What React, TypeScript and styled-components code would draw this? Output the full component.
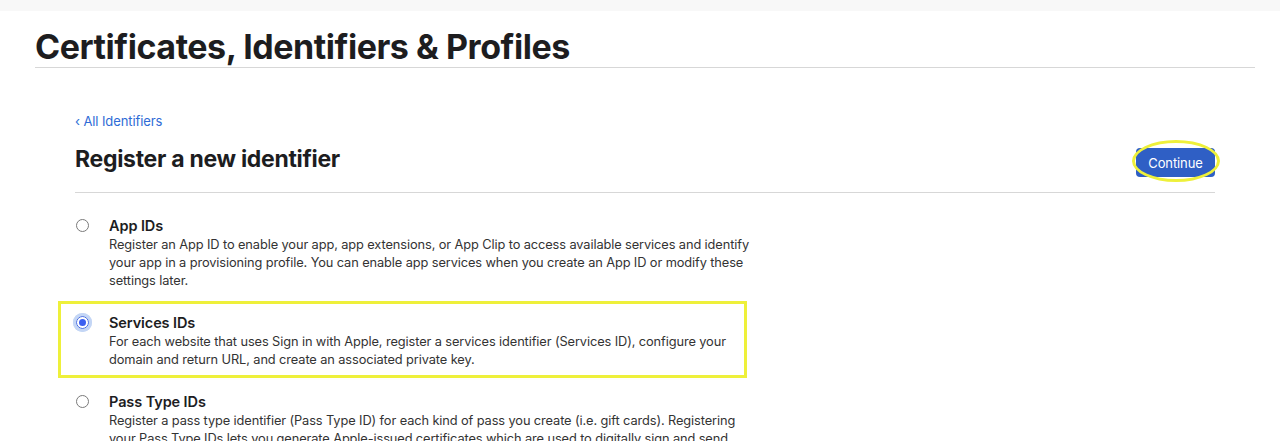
import React from "react";
import styled, { createGlobalStyle } from "styled-components";

const Global = createGlobalStyle`
  html, body { margin: 0; padding: 0; background: #ffffff; }
  body {
    font-family: Inter, "Noto Sans", "Liberation Sans", sans-serif;
    color: #1d1d1f;
    -webkit-font-smoothing: antialiased;
  }
  * { box-sizing: border-box; }
`;

const TopBar = styled.div`
  height: 11px;
  background: #f8f8f8;
`;

const Page = styled.div`
  padding: 0 25px 0 35px;
`;

const PageTitle = styled.h1`
  margin: 0;
  padding-top: 16px;
  font-size: 34px;
  line-height: 40px;
  font-weight: 700;
  letter-spacing: -0.45px;
  color: #1d1d1f;
  border-bottom: 1px solid #d7d7d7;
`;

const Content = styled.div`
  padding: 42px 40px 0 40px;
`;

const BackLink = styled.a`
  display: inline-block;
  font-size: 13px;
  line-height: 18px;
  color: #2e6bd6;
  text-decoration: none;
  letter-spacing: -0.1px;
`;

const HeaderRow = styled.div`
  display: flex;
  align-items: center;
  justify-content: space-between;
  height: 63px;
  padding-bottom: 5px;
  border-bottom: 1px solid #d7d7d7;
`;

const SubTitle = styled.h2`
  margin: 0;
  font-size: 23px;
  line-height: 28px;
  font-weight: 700;
  letter-spacing: -0.3px;
  color: #1d1d1f;
`;

const ButtonWrap = styled.div`
  position: relative;
  margin-top: 8px;
`;

const PrimaryButton = styled.button`
  display: block;
  width: 79px;
  height: 29px;
  border: none;
  border-radius: 4px;
  background: #2f5fc5;
  color: #ffffff;
  font-family: inherit;
  font-size: 13px;
  letter-spacing: -0.1px;
  padding: 0;
`;

const EllipseMark = styled.span`
  position: absolute;
  left: -4px;
  top: -8px;
  width: 88px;
  height: 42px;
  border: 3px solid #eef03a;
  border-radius: 50%;
  pointer-events: none;
`;

const List = styled.div`
  padding-top: 23px;
`;

const Item = styled.label`
  position: relative;
  display: grid;
  grid-template-columns: 34px 1fr;
  padding-bottom: 23px;
`;

const RadioCell = styled.span`
  display: flex;
  justify-content: flex-start;
  padding-top: 3px;
  padding-left: 1px;
`;

const Radio = styled.span<{ $checked?: boolean }>`
  position: relative;
  width: 13px;
  height: 13px;
  border-radius: 50%;
  border: 1px solid ${(p) => (p.$checked ? "#3e63e0" : "#7a7a7a")};
  background: #fff;
  ${(p) =>
    p.$checked &&
    `
    outline: 3px solid #c4d6f5;
    outline-offset: 0;
    box-shadow: 0 0 0 3px #c4d6f5;
    &::before {
      content: "";
      position: absolute;
      left: -4px; top: -4px;
      width: 19px; height: 19px;
      background: #c4d6f5;
      z-index: -1;
    }
    &::after {
      content: "";
      position: absolute;
      left: 2px; top: 2px;
      width: 7px; height: 7px;
      border-radius: 50%;
      background: #3b5ff0;
    }
  `}
`;

const Texts = styled.div`
  display: flex;
  flex-direction: column;
`;

const ItemTitle = styled.div`
  font-size: 14.5px;
  line-height: 20px;
  font-weight: 600;
  color: #1d1d1f;
  letter-spacing: -0.1px;
`;

const ItemDesc = styled.div`
  font-size: 12.8px;
  line-height: 18px;
  color: #333333;
  letter-spacing: -0.1px;
  white-space: nowrap;
`;

const BoxMark = styled.span`
  position: absolute;
  left: -17px;
  top: -12px;
  width: 689px;
  height: 77px;
  border: 3px solid #eef03a;
  pointer-events: none;
`;

type Entry = { title: string; lines: string[]; checked?: boolean; marked?: boolean };

const entries: Entry[] = [
  {
    title: "App IDs",
    lines: [
      "Register an App ID to enable your app, app extensions, or App Clip to access available services and identify",
      "your app in a provisioning profile. You can enable app services when you create an App ID or modify these",
      "settings later.",
    ],
  },
  {
    title: "Services IDs",
    checked: true,
    marked: true,
    lines: [
      "For each website that uses Sign in with Apple, register a services identifier (Services ID), configure your",
      "domain and return URL, and create an associated private key.",
    ],
  },
  {
    title: "Pass Type IDs",
    lines: [
      "Register a pass type identifier (Pass Type ID) for each kind of pass you create (i.e. gift cards). Registering",
      "your Pass Type IDs lets you generate Apple-issued certificates which are used to digitally sign and send",
      "updates to your passes, and allow your passes to be recognized by Wallet.",
    ],
  },
];

export default function App() {
  return (
    <>
      <Global />
      <TopBar />
      <Page>
        <PageTitle>Certificates, Identifiers &amp; Profiles</PageTitle>
        <Content>
          <BackLink href="#">‹ All Identifiers</BackLink>
          <HeaderRow>
            <SubTitle>Register a new identifier</SubTitle>
            <ButtonWrap>
              <PrimaryButton>Continue</PrimaryButton>
              <EllipseMark />
            </ButtonWrap>
          </HeaderRow>
          <List>
            {entries.map((e) => (
              <Item key={e.title}>
                {e.marked && <BoxMark />}
                <RadioCell>
                  <Radio $checked={e.checked} />
                </RadioCell>
                <Texts>
                  <ItemTitle>{e.title}</ItemTitle>
                  {e.lines.map((l) => (
                    <ItemDesc key={l}>{l}</ItemDesc>
                  ))}
                </Texts>
              </Item>
            ))}
          </List>
        </Content>
      </Page>
    </>
  );
}
